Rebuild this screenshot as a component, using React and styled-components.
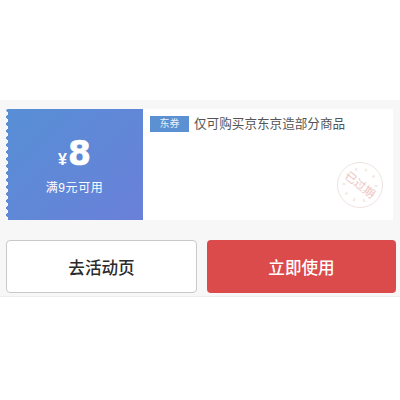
import React from "react";
import styled, { createGlobalStyle } from "styled-components";

const GlobalStyle = createGlobalStyle`
  html, body {
    margin: 0;
    padding: 0;
    background: #fff;
    font-family: "Liberation Sans", "Noto Sans CJK SC", sans-serif;
  }
`;

const Page = styled.div`
  width: 400px;
  height: 400px;
  padding-top: 100px;
  box-sizing: border-box;
`;

const Panel = styled.div`
  background: #f7f7f7;
  height: 197px;
  padding: 9px 4px 0 6px;
  box-sizing: border-box;
  border-bottom: 1px solid #eeeeee;
`;

const Coupon = styled.div`
  display: flex;
  height: 111px;
  margin-right: 3px;
  background: #fff;
`;

const Face = styled.div`
  position: relative;
  width: 137px;
  display: flex;
  flex-direction: column;
  align-items: center;
  color: #fff;
  background: linear-gradient(135deg, #578fd5, #6a80d9);
  border-radius: 2px 0 0 2px;

  &::before {
    content: "";
    position: absolute;
    left: 0;
    top: 0;
    bottom: 0;
    width: 4px;
    background: radial-gradient(circle at 0 50%, #f7f7f7 2px, transparent 2.5px) 0 1px / 4px 7px repeat-y;
  }
`;

const Amount = styled.div`
  display: flex;
  align-items: baseline;
  margin-top: 26px;
  height: 38px;
  line-height: 38px;
`;

const Currency = styled.span`
  font-size: 16px;
  font-weight: 700;
  margin-right: 1px;
`;

const Value = styled.span`
  font-family: "DejaVu Sans", sans-serif;
  font-size: 33px;
  font-weight: 700;
  -webkit-text-stroke: 0.6px #fff;
`;

const Condition = styled.div`
  font-size: 12px;
  line-height: 16px;
  letter-spacing: 0.6px;
  margin-top: 7px;
`;

const Body = styled.div`
  position: relative;
  flex: 1;
  padding: 7px 7px 0 7px;
`;

const Title = styled.div`
  display: flex;
  align-items: center;
  gap: 5px;
  color: #555;
  font-size: 12.6px;
  line-height: 16px;
`;

const Tag = styled.span`
  width: 39px;
  height: 16px;
  background: #5b91d3;
  color: #e8f0fa;
  font-size: 10px;
  text-align: center;
`;

const Stamp = styled.svg`
  position: absolute;
  right: 9px;
  bottom: 11px;
  width: 48px;
  height: 48px;
`;

const Actions = styled.div`
  display: flex;
  gap: 10px;
  margin-top: 20px;
`;

const Button = styled.div`
  height: 53px;
  box-sizing: border-box;
  display: flex;
  align-items: center;
  justify-content: center;
  border-radius: 4px;
  font-size: 16.6px;
  font-weight: 500;
  width: ${p => (p.$primary ? "189px" : "191px")};
  background: ${p => (p.$primary ? "#db4b4b" : "#fff")};
  color: ${p => (p.$primary ? "#fff" : "#2b2b2b")};
  border: ${p => (p.$primary ? "none" : "1px solid #c9c9c9")};
`;

export default function App() {
  return (
    <Page>
      <GlobalStyle />
      <Panel>
        <Coupon>
          <Face>
            <Amount>
              <Currency>¥</Currency>
              <Value>8</Value>
            </Amount>
            <Condition>满9元可用</Condition>
          </Face>
          <Body>
            <Title>
              <Tag>东券</Tag>
              仅可购买京东京造部分商品
            </Title>
            <Stamp viewBox="0 0 48 48">
              <circle cx="24" cy="24" r="22.5" fill="none" stroke="#eee3df" strokeWidth="1" />
              <circle cx="24" cy="24" r="16" fill="none" stroke="#f5e9e6" strokeWidth="3" strokeDasharray="2 8" />
              <text
                x="24"
                y="28"
                textAnchor="middle"
                fontSize="11.5"
                fill="#eec6bf"
                transform="rotate(38 24 24)"
              >
                已过期
              </text>
            </Stamp>
          </Body>
        </Coupon>
        <Actions>
          <Button>去活动页</Button>
          <Button $primary>立即使用</Button>
        </Actions>
      </Panel>
    </Page>
  );
}
